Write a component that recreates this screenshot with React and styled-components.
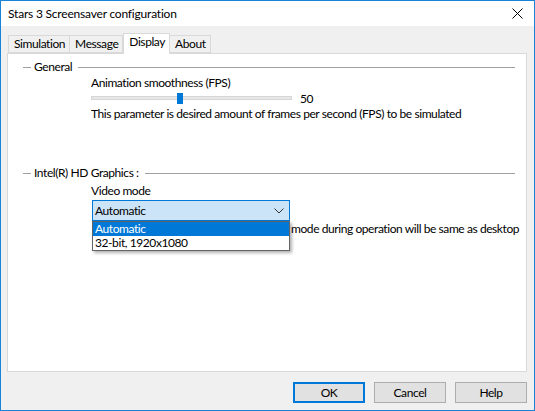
import React from 'react';
import styled, { createGlobalStyle } from 'styled-components';

const GlobalStyle = createGlobalStyle`
  html, body {
    margin: 0;
    padding: 0;
    background: #ffffff;
  }
  body {
    font-family: Lato, "Noto Sans", "Liberation Sans", sans-serif;
    font-size: 12px;
    letter-spacing: -0.42px;
    color: #000;
  }
`;

const Window = styled.div`
  box-sizing: border-box;
  width: 535px;
  height: 411px;
  border: 1px solid #1883d7;
  background: #f0f0f0;
  display: flex;
  flex-direction: column;
`;

const TitleBar = styled.div`
  height: 25px;
  background: #ffffff;
  display: flex;
  align-items: center;
  justify-content: space-between;
  padding: 0 11px 0 7px;
  flex: none;
`;

const Title = styled.span`
  font-size: 12px;
  line-height: 16px;
  letter-spacing: -0.2px;
`;

const Body = styled.div`
  flex: 1;
  display: flex;
  flex-direction: column;
  padding: 7px 7px 0 6px;
`;

const TabStrip = styled.div`
  display: flex;
  align-items: flex-end;
  height: 20px;
  padding-left: 1px;
`;

const Tab = styled.div`
  box-sizing: border-box;
  height: ${({ active }) => (active ? '21px' : '18px')};
  margin-bottom: ${({ active }) => (active ? '-1px' : '0')};
  padding: 0 4px 0 5px;
  border: 1px solid #d9d9d9;
  border-bottom: ${({ active }) => (active ? 'none' : '1px solid #d9d9d9')};
  border-left: ${({ first, active }) => (first || active ? '1px solid #d9d9d9' : 'none')};
  background: ${({ active }) => (active ? '#ffffff' : '#f0f0f0')};
  line-height: 16px;
  position: relative;
  z-index: ${({ active }) => (active ? 1 : 0)};
`;

const Panel = styled.div`
  box-sizing: border-box;
  height: 319px;
  background: #ffffff;
  border: 1px solid #d9d9d9;
  padding-top: 5px;
  display: flex;
  flex-direction: column;
`;

const GroupHeader = styled.div`
  display: flex;
  align-items: center;
  gap: 3px;
  margin: ${({ top }) => `${top || 0}px 11px 0 15px`};
  line-height: 16px;
  &::before {
    content: '';
    width: 8px;
    height: 1px;
    background: #a0a0a0;
  }
  &::after {
    content: '';
    flex: 1;
    height: 1px;
    background: #a0a0a0;
    margin-left: 3px;
  }
`;

const Content = styled.div`
  padding-left: 83px;
  display: flex;
  flex-direction: column;
`;

const Label = styled.div`
  line-height: 16px;
  margin-top: ${({ top }) => top || 0}px;
  padding-left: ${({ indent }) => indent || 0}px;
  white-space: nowrap;
`;

const SliderRow = styled.div`
  display: flex;
  align-items: center;
  height: 14px;
  gap: 8px;
`;

const Track = styled.div`
  position: relative;
  width: 201px;
  height: 4px;
  background: #e7e7e7;
  border: 1px solid #d6d6d6;
  box-sizing: border-box;
`;

const Thumb = styled.div`
  position: absolute;
  top: -4px;
  width: 6px;
  height: 11px;
  background: #0078d7;
`;

const ComboWrap = styled.div`
  position: relative;
  margin-top: 1px;
  margin-left: 1px;
  width: 198px;
`;

const Combo = styled.div`
  box-sizing: border-box;
  height: 21px;
  border: 1px solid #0078d7;
  background: #cce4f7;
  display: flex;
  align-items: center;
  justify-content: space-between;
  padding: 0 5px 0 2px;
`;

const DropList = styled.div`
  position: absolute;
  top: 21px;
  left: 0;
  width: 198px;
  box-sizing: border-box;
  border: 1px solid #646464;
  background: #ffffff;
  box-shadow: 2px 2px 3px rgba(0, 0, 0, 0.3);
  z-index: 2;
`;

const Item = styled.div`
  height: 14px;
  line-height: 14px;
  overflow: hidden;
  padding-left: 2px;
  background: ${({ selected }) => (selected ? '#0078d7' : '#ffffff')};
  color: ${({ selected }) => (selected ? '#ffffff' : '#000000')};
`;

const ButtonRow = styled.div`
  display: flex;
  justify-content: flex-end;
  gap: 9px;
  margin-top: 10px;
`;

const Button = styled.button`
  box-sizing: border-box;
  width: 72px;
  height: 21px;
  font-family: inherit;
  font-size: 12px;
  letter-spacing: inherit;
  color: #000;
  background: #e1e1e1;
  border: ${({ primary }) => (primary ? '2px solid #0078d7' : '1px solid #adadad')};
  padding: 0;
`;

const Chevron = () => (
  <svg width="10" height="6" viewBox="0 0 10 6">
    <path d="M0.5 0.5 L5 5 L9.5 0.5" fill="none" stroke="#333" strokeWidth="1" />
  </svg>
);

const CloseIcon = () => (
  <svg width="11" height="11" viewBox="0 0 11 11">
    <path d="M0.5 0.5 L10.5 10.5 M10.5 0.5 L0.5 10.5" stroke="#000" strokeWidth="1" />
  </svg>
);

const tabs = ['Simulation', 'Message', 'Display', 'About'];

export default function App() {
  return (
    <>
      <GlobalStyle />
      <Window>
        <TitleBar>
          <Title>Stars 3 Screensaver configuration</Title>
          <CloseIcon />
        </TitleBar>
        <Body>
          <TabStrip>
            {tabs.map((t, i) => (
              <Tab key={t} first={i === 0} active={t === 'Display'}>
                {t}
              </Tab>
            ))}
          </TabStrip>
          <Panel>
            <GroupHeader>General</GroupHeader>
            <Content>
              <Label>Animation smoothness (FPS)</Label>
              <SliderRow>
                <Track>
                  <Thumb style={{ left: `${(50 / 115) * 195}px` }} />
                </Track>
                <span>50</span>
              </SliderRow>
              <Label top={1}>
                This parameter is desired amount of frames per second (FPS) to be simulated
              </Label>
            </Content>
            <GroupHeader top={43}>Intel(R) HD Graphics :</GroupHeader>
            <Content>
              <Label top={2}>Video mode</Label>
              <ComboWrap>
                <Combo>
                  <span>Automatic</span>
                  <Chevron />
                </Combo>
                <DropList>
                  <Item selected>Automatic</Item>
                  <Item>32-bit, 1920x1080</Item>
                </DropList>
              </ComboWrap>
              {/* the start of this line sits under the open drop-down list */}
              <Label indent={200}>mode during operation will be same as desktop</Label>
            </Content>
          </Panel>
          <ButtonRow>
            <Button primary>OK</Button>
            <Button>Cancel</Button>
            <Button>Help</Button>
          </ButtonRow>
        </Body>
      </Window>
    </>
  );
}
